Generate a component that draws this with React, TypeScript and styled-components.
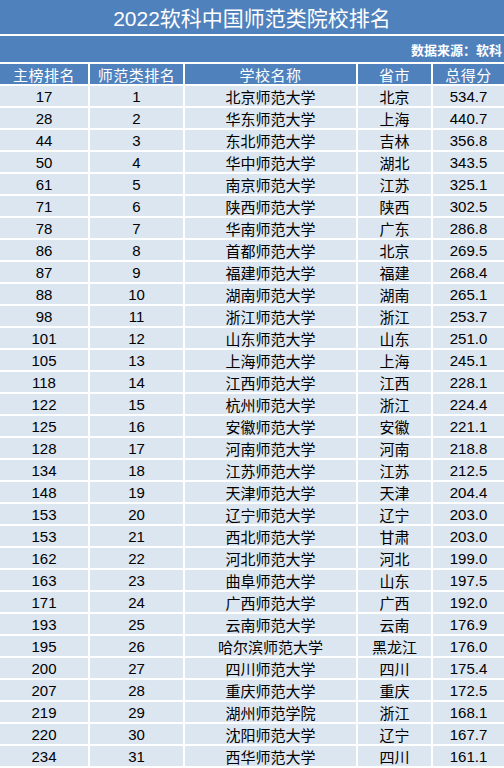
import React from 'react';
import styled, { createGlobalStyle } from 'styled-components';

const GlobalStyle = createGlobalStyle`
  html, body {
    margin: 0;
    padding: 0;
    background: #ffffff;
  }
  body {
    font-family: 'Liberation Sans', 'Noto Sans CJK SC', sans-serif;
    overflow: hidden;
  }
`;

const Sheet = styled.div`
  width: 504px;
  height: 768px;
  display: flex;
  flex-direction: column;
  gap: 2px;
  background: #ffffff;
  overflow: hidden;
`;

const TitleBar = styled.div`
  height: 34px;
  flex-shrink: 0;
  background: #4f81bd;
  color: #ffffff;
  font-size: 21px;
  display: flex;
  align-items: center;
  justify-content: center;
`;

const SourceBar = styled.div`
  height: 26px;
  flex-shrink: 0;
  background: #4f81bd;
  color: #ffffff;
  font-size: 13px;
  font-weight: bold;
  display: flex;
  align-items: center;
  justify-content: flex-end;
  padding-right: 2px;
  white-space: nowrap;
`;

const Grid = styled.div`
  display: grid;
  grid-template-columns: 88px 93px 171px 73px 1fr;
  grid-auto-rows: 20px;
  gap: 2px;
  flex-shrink: 0;
`;

const Cell = styled.div<{ $head?: boolean }>`
  display: flex;
  align-items: center;
  justify-content: center;
  white-space: nowrap;
  font-size: 15px;
  letter-spacing: ${(p) => (p.$head ? '0.5px' : '0')};
  background: ${(p) => (p.$head ? '#4f81bd' : '#dce6f1')};
  color: ${(p) => (p.$head ? '#ffffff' : '#000000')};
`;

const headers = ['主榜排名', '师范类排名', '学校名称', '省市', '总得分'];

const rows: [number, number, string, string, string][] = [
  [17, 1, '北京师范大学', '北京', '534.7'],
  [28, 2, '华东师范大学', '上海', '440.7'],
  [44, 3, '东北师范大学', '吉林', '356.8'],
  [50, 4, '华中师范大学', '湖北', '343.5'],
  [61, 5, '南京师范大学', '江苏', '325.1'],
  [71, 6, '陕西师范大学', '陕西', '302.5'],
  [78, 7, '华南师范大学', '广东', '286.8'],
  [86, 8, '首都师范大学', '北京', '269.5'],
  [87, 9, '福建师范大学', '福建', '268.4'],
  [88, 10, '湖南师范大学', '湖南', '265.1'],
  [98, 11, '浙江师范大学', '浙江', '253.7'],
  [101, 12, '山东师范大学', '山东', '251.0'],
  [105, 13, '上海师范大学', '上海', '245.1'],
  [118, 14, '江西师范大学', '江西', '228.1'],
  [122, 15, '杭州师范大学', '浙江', '224.4'],
  [125, 16, '安徽师范大学', '安徽', '221.1'],
  [128, 17, '河南师范大学', '河南', '218.8'],
  [134, 18, '江苏师范大学', '江苏', '212.5'],
  [148, 19, '天津师范大学', '天津', '204.4'],
  [153, 20, '辽宁师范大学', '辽宁', '203.0'],
  [153, 21, '西北师范大学', '甘肃', '203.0'],
  [162, 22, '河北师范大学', '河北', '199.0'],
  [163, 23, '曲阜师范大学', '山东', '197.5'],
  [171, 24, '广西师范大学', '广西', '192.0'],
  [193, 25, '云南师范大学', '云南', '176.9'],
  [195, 26, '哈尔滨师范大学', '黑龙江', '176.0'],
  [200, 27, '四川师范大学', '四川', '175.4'],
  [207, 28, '重庆师范大学', '重庆', '172.5'],
  [219, 29, '湖州师范学院', '浙江', '168.1'],
  [220, 30, '沈阳师范大学', '辽宁', '167.7'],
  [234, 31, '西华师范大学', '四川', '161.1'],
];

const App = () => (
  <>
    <GlobalStyle />
    <Sheet>
      <TitleBar>2022软科中国师范类院校排名</TitleBar>
      <SourceBar>数据来源：软科</SourceBar>
      <Grid>
        {headers.map((h) => (
          <Cell key={h} $head>
            {h}
          </Cell>
        ))}
        {rows.map((r) =>
          r.map((v, i) => <Cell key={`${r[1]}-${i}`}>{v}</Cell>)
        )}
      </Grid>
    </Sheet>
  </>
);

export default App;
